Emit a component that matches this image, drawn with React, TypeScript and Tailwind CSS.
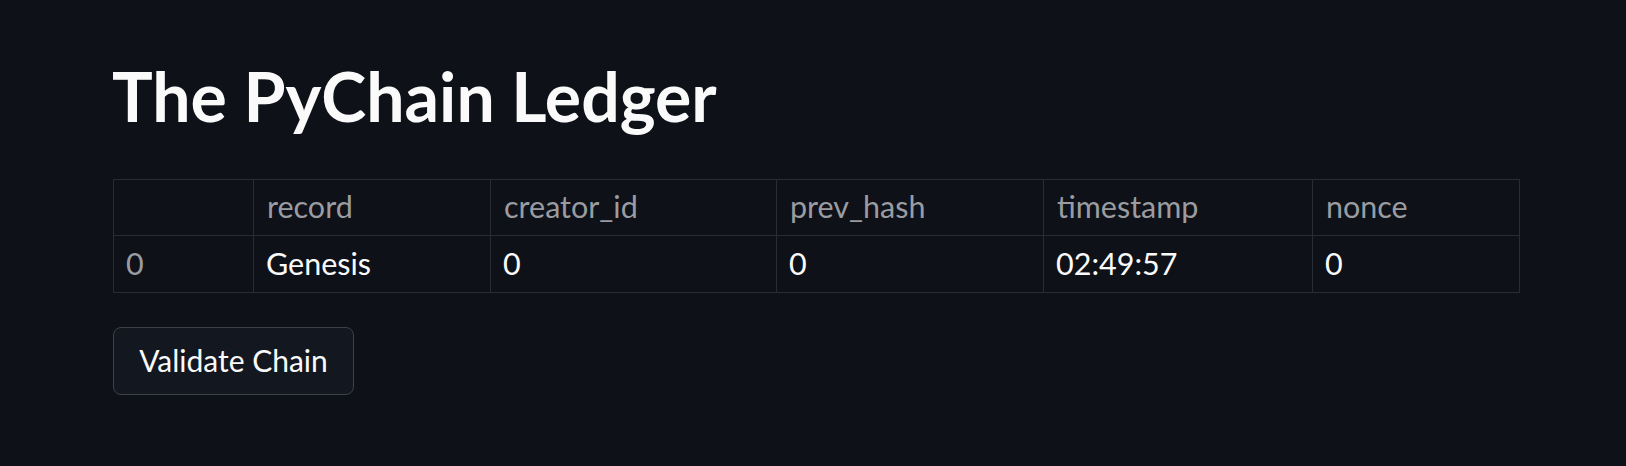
import React from "react";

const cols = ["w-[140px]", "w-[237px]", "w-[286px]", "w-[267px]", "w-[269px]", "w-[207px]"];
const header = ["", "record", "creator_id", "prev_hash", "timestamp", "nonce"];
const row = ["0", "Genesis", "0", "0", "02:49:57", "0"];

export default function App() {
  return (
    <div className="min-h-[466px] w-full bg-[#0e1117] pl-[112px] pt-[55px] font-['Lato',sans-serif]">
      <h1 className="text-[68px] font-bold leading-[1.2] text-[#fafafa]">The PyChain Ledger</h1>

      <div className="mt-[42px] ml-[1px] inline-flex flex-col border-l border-t border-[#2a2c33]">
        <div className="flex">
          {header.map((h, i) => (
            <div
              key={i}
              className={`${cols[i]} flex h-[56px] items-center border-b border-r border-[#2a2c33] pl-[13px] text-[30.5px] text-[#9a9ca2]`}
            >
              {h}
            </div>
          ))}
        </div>
        <div className="flex">
          {row.map((c, i) => (
            <div
              key={i}
              className={`${cols[i]} flex h-[57px] items-center border-b border-r border-[#2a2c33] pl-[12px] text-[30.5px] ${
                i === 0 ? "text-[#9a9ca2]" : "text-[#fafafa]"
              }`}
            >
              {c}
            </div>
          ))}
        </div>
      </div>

      <div className="mt-[34px] ml-[1px]">
        <button className="flex h-[68px] w-[241px] items-center justify-center rounded-[8px] border border-[#3f4148] bg-[#131720] text-[30px] text-[#fafafa]">
          Validate Chain
        </button>
      </div>
    </div>
  );
}
